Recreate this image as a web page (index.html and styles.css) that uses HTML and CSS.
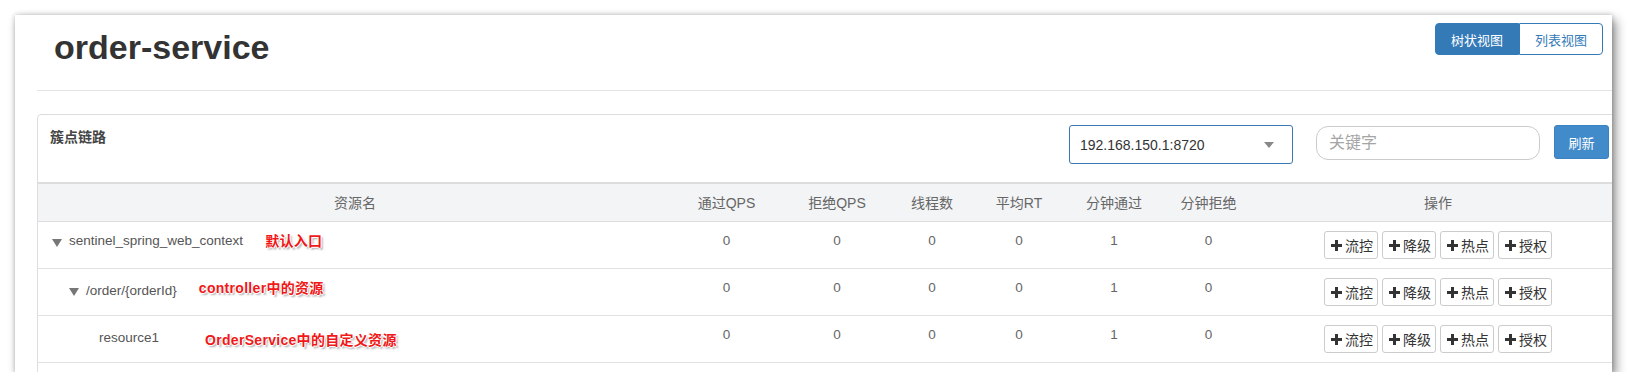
FILE: index.html
```html
<!DOCTYPE html>
<html>
  <head>
    <title>order-service</title>
    <meta charset="utf-8" />
    <link rel="stylesheet" href="styles.css">
  </head>
  <body>
    <div class="shot">
      <div class="page">
        <header class="page-head">
          <h1 class="app-name">order-service</h1>
          <div class="view-switch">
            <button class="switch-btn active">树状视图</button><button class="switch-btn">列表视图</button>
          </div>
        </header>

        <div class="card">
          <div class="card-head">
            <span class="card-title">簇点链路</span>
            <div class="machine-select">
              <span>192.168.150.1:8720</span>
              <span class="caret"></span>
            </div>
            <input type="text" class="search" placeholder="关键字">
            <button class="btn-refresh">刷新</button>
          </div>

          <div class="tree-table">
            <div class="row head">
              <div class="cell">资源名</div>
              <div class="cell">通过QPS</div>
              <div class="cell">拒绝QPS</div>
              <div class="cell">线程数</div>
              <div class="cell">平均RT</div>
              <div class="cell">分钟通过</div>
              <div class="cell">分钟拒绝</div>
              <div class="cell">操作</div>
            </div>

            <div class="row">
              <div class="cell name lvl1">
                <span class="toggle"></span>sentinel_spring_web_context
                <span class="note">默认入口</span>
              </div>
              <div class="cell num">0</div>
              <div class="cell num">0</div>
              <div class="cell num">0</div>
              <div class="cell num">0</div>
              <div class="cell num">1</div>
              <div class="cell num">0</div>
              <div class="cell ops">
                <button class="op-btn"><svg class="plus" viewBox="0 0 11 11"><path d="M4 0h3v4h4v3H7v4H4V7H0V4h4z"/></svg>流控</button>
                <button class="op-btn"><svg class="plus" viewBox="0 0 11 11"><path d="M4 0h3v4h4v3H7v4H4V7H0V4h4z"/></svg>降级</button>
                <button class="op-btn"><svg class="plus" viewBox="0 0 11 11"><path d="M4 0h3v4h4v3H7v4H4V7H0V4h4z"/></svg>热点</button>
                <button class="op-btn"><svg class="plus" viewBox="0 0 11 11"><path d="M4 0h3v4h4v3H7v4H4V7H0V4h4z"/></svg>授权</button>
              </div>
            </div>

            <div class="row">
              <div class="cell name lvl2">
                <span class="toggle"></span>/order/{orderId}
                <span class="note raised">controller中的资源</span>
              </div>
              <div class="cell num">0</div>
              <div class="cell num">0</div>
              <div class="cell num">0</div>
              <div class="cell num">0</div>
              <div class="cell num">1</div>
              <div class="cell num">0</div>
              <div class="cell ops">
                <button class="op-btn"><svg class="plus" viewBox="0 0 11 11"><path d="M4 0h3v4h4v3H7v4H4V7H0V4h4z"/></svg>流控</button>
                <button class="op-btn"><svg class="plus" viewBox="0 0 11 11"><path d="M4 0h3v4h4v3H7v4H4V7H0V4h4z"/></svg>降级</button>
                <button class="op-btn"><svg class="plus" viewBox="0 0 11 11"><path d="M4 0h3v4h4v3H7v4H4V7H0V4h4z"/></svg>热点</button>
                <button class="op-btn"><svg class="plus" viewBox="0 0 11 11"><path d="M4 0h3v4h4v3H7v4H4V7H0V4h4z"/></svg>授权</button>
              </div>
            </div>

            <div class="row">
              <div class="cell name lvl3">
                resource1
                <span class="note wide lowered">OrderService中的自定义资源</span>
              </div>
              <div class="cell num">0</div>
              <div class="cell num">0</div>
              <div class="cell num">0</div>
              <div class="cell num">0</div>
              <div class="cell num">1</div>
              <div class="cell num">0</div>
              <div class="cell ops">
                <button class="op-btn"><svg class="plus" viewBox="0 0 11 11"><path d="M4 0h3v4h4v3H7v4H4V7H0V4h4z"/></svg>流控</button>
                <button class="op-btn"><svg class="plus" viewBox="0 0 11 11"><path d="M4 0h3v4h4v3H7v4H4V7H0V4h4z"/></svg>降级</button>
                <button class="op-btn"><svg class="plus" viewBox="0 0 11 11"><path d="M4 0h3v4h4v3H7v4H4V7H0V4h4z"/></svg>热点</button>
                <button class="op-btn"><svg class="plus" viewBox="0 0 11 11"><path d="M4 0h3v4h4v3H7v4H4V7H0V4h4z"/></svg>授权</button>
              </div>
            </div>
          </div>
        </div>
      </div>
    </div>
  </body>
</html>
```

FILE: styles.css
```css
body {
  margin: 0;
  background-color: #fff;
  font-family: "Liberation Sans", "Noto Sans CJK SC", sans-serif;
  color: #555;
}

.shot {
  padding: 15px 15px 0 15px;
}

.page {
  width: 1597px;
  height: 357px;
  overflow: hidden;
  background-color: #fff;
  box-shadow: 0 0 5px rgba(0, 0, 0, 0.22), 4px 5px 10px rgba(0, 0, 0, 0.42);
}

/* top bar */
.page-head {
  display: flex;
  justify-content: space-between;
  align-items: flex-start;
  height: 75px;
  margin-left: 22px;
  padding-right: 9px;
  border-bottom: 1px solid #e5e5e5;
}

.app-name {
  margin: 12px 0 0 17px;
  font-size: 34px;
  line-height: 40px;
  font-weight: bold;
  color: #333;
}

.view-switch {
  display: flex;
  margin-top: 8px;
}

.switch-btn {
  height: 32px;
  padding: 0 15px;
  font-family: inherit;
  font-size: 13px;
  color: #337ab7;
  background-color: #fff;
  border: 1px solid #337ab7;
  border-radius: 0 4px 4px 0;
}

.switch-btn.active {
  color: #fff;
  background-color: #337ab7;
  border-radius: 4px 0 0 4px;
}

/* card */
.card {
  box-sizing: border-box;
  width: 1587px;
  min-height: 300px;
  margin: 23px 0 0 22px;
  border: 1px solid #ddd;
  border-radius: 4px;
}

.card-head {
  display: flex;
  align-items: flex-start;
  box-sizing: border-box;
  height: 67px;
  padding: 10px 14px 0 12px;
}

.card-title {
  margin: 2px auto 0 0;
  font-size: 14px;
  line-height: 20px;
  font-weight: bold;
  color: #444;
}

.machine-select {
  display: flex;
  justify-content: space-between;
  align-items: center;
  box-sizing: border-box;
  width: 224px;
  height: 39px;
  padding: 0 18px 0 10px;
  font-size: 14px;
  color: #333;
  border: 1px solid #3a78b6;
  border-radius: 3px;
}

.caret {
  width: 0;
  height: 0;
  border-left: 5px solid transparent;
  border-right: 5px solid transparent;
  border-top: 6px solid #888;
}

.search {
  box-sizing: border-box;
  width: 224px;
  height: 34px;
  margin: 1px 0 0 23px;
  padding: 0 12px;
  font-family: inherit;
  font-size: 16px;
  border: 1px solid #ccc;
  border-radius: 12px;
  outline: none;
}

.search::placeholder {
  color: #a5a5a5;
}

.btn-refresh {
  width: 55px;
  height: 34px;
  margin-left: 14px;
  font-family: inherit;
  font-size: 13px;
  color: #fff;
  background-color: #428bca;
  border: 1px solid #3b82c0;
  border-radius: 3px;
}

/* tree table */
.tree-table {
  border-top: 2px solid #ddd;
}

.row {
  display: grid;
  grid-template-columns: 634px 109px 112px 78px 96px 94px 95px 364px;
  align-items: start;
  padding: 9px 0;
  border-bottom: 1px solid #e2e2e2;
  font-size: 13.5px;
}

.row.head {
  align-items: center;
  height: 37px;
  padding: 0;
  background-color: #f3f4f6;
  border-bottom-color: #ddd;
  font-size: 14px;
  color: #666;
}

.cell {
  display: flex;
  justify-content: center;
  align-items: center;
  white-space: nowrap;
  line-height: 20px;
}

.cell.num {
  color: #666;
}

.cell.name {
  justify-content: flex-start;
  padding-left: 14px;
  color: #555;
}

.cell.lvl2 {
  padding-left: 31px;
}

.cell.lvl3 {
  padding-left: 61px;
}

.toggle {
  width: 0;
  height: 0;
  margin: 3px 7px 0 0;
  border-left: 5px solid transparent;
  border-right: 5px solid transparent;
  border-top: 8px solid #777;
}

/* red notes drawn over the screenshot */
.note {
  margin-left: 22px;
  font-size: 14px;
  font-weight: bold;
  letter-spacing: 0.3px;
  color: #f01818;
  text-shadow: 1px 0 0 #fff, -1px 0 0 #fff, 0 1px 0 #fff, 0 -1px 0 #fff,
    2px 2px 2px rgba(0, 0, 0, 0.35);
}

.note.wide {
  margin-left: 46px;
}

.note.raised {
  margin-bottom: 5px;
}

.note.lowered {
  margin-top: 5px;
}

.cell.ops {
  gap: 4px;
}

.op-btn {
  display: inline-flex;
  align-items: center;
  gap: 3px;
  box-sizing: border-box;
  width: 54px;
  height: 28px;
  padding: 0 4px 0 6px;
  font-family: inherit;
  font-size: 14px;
  color: #333;
  background-color: #fff;
  border: 1px solid #ccc;
  border-radius: 3px;
}

.plus {
  width: 11px;
  height: 11px;
  fill: #333;
}
```
